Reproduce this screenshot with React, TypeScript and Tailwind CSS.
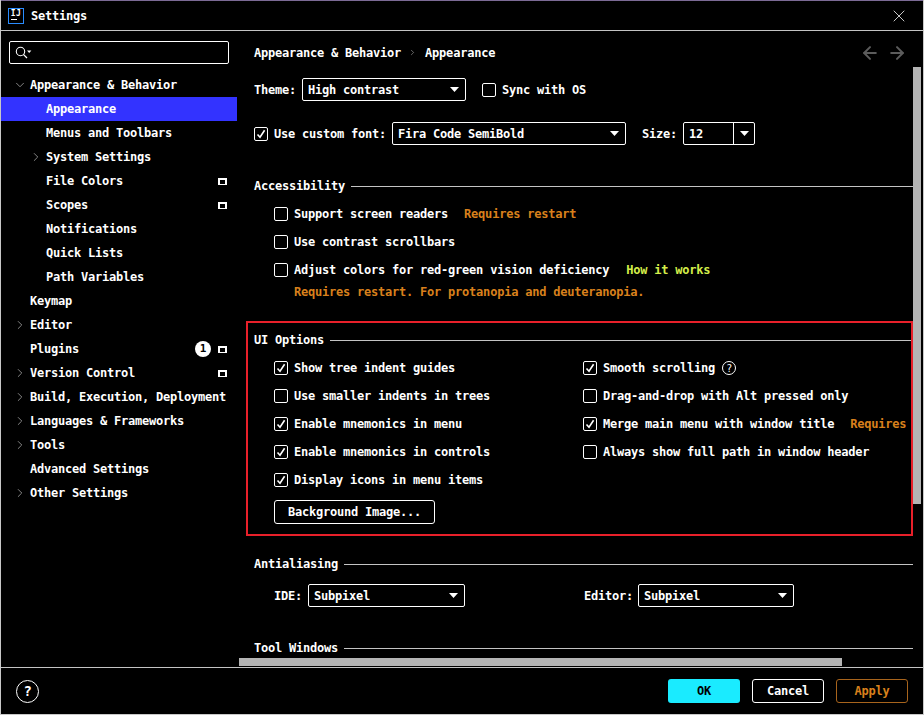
import React from 'react';
import { ChevronDown, ChevronRight, X, ArrowLeft, ArrowRight } from 'lucide-react';

const tree = [
  { label: 'Appearance & Behavior', indent: 0, arrow: 'down' },
  { label: 'Appearance', indent: 1, selected: true },
  { label: 'Menus and Toolbars', indent: 1 },
  { label: 'System Settings', indent: 1, arrow: 'right' },
  { label: 'File Colors', indent: 1, project: true },
  { label: 'Scopes', indent: 1, project: true },
  { label: 'Notifications', indent: 1 },
  { label: 'Quick Lists', indent: 1 },
  { label: 'Path Variables', indent: 1 },
  { label: 'Keymap', indent: 0 },
  { label: 'Editor', indent: 0, arrow: 'right' },
  { label: 'Plugins', indent: 0, project: true, badge: '1' },
  { label: 'Version Control', indent: 0, arrow: 'right', project: true },
  { label: 'Build, Execution, Deployment', indent: 0, arrow: 'right' },
  { label: 'Languages & Frameworks', indent: 0, arrow: 'right' },
  { label: 'Tools', indent: 0, arrow: 'right' },
  { label: 'Advanced Settings', indent: 0 },
  { label: 'Other Settings', indent: 0, arrow: 'right' },
];

const Caret = () => (
  <svg width="9" height="5" viewBox="0 0 9 5" className="shrink-0">
    <path d="M0 0h9L4.500 5z" fill="#fff" />
  </svg>
);

const ProjectIcon = () => (
  <span className="block w-[9px] h-[7px] bg-black border-x-2 border-t-2 border-b border-white shrink-0" />
);

const Check = ({ checked = false }: { checked?: boolean }) => (
  <span className="flex items-center justify-center w-[14px] h-[14px] border border-white rounded-[2px] shrink-0">
    {checked && (
      <svg width="10" height="10" viewBox="0 0 10 10">
        <path d="M1.500 5.500 4 8.200 8.600 1.200" fill="none" stroke="#fff" strokeWidth="1.6" />
      </svg>
    )}
  </span>
);

const CheckRow = ({ label, checked, children }: { label: string; checked?: boolean; children?: React.ReactNode }) => (
  <div className="flex items-center h-[28px] whitespace-nowrap">
    <Check checked={checked} />
    <span className="ml-[6px]">{label}</span>
    {children}
  </div>
);

const Select = ({ value, width }: { value: string; width: string }) => (
  <div className={`flex items-center justify-between h-[23px] border border-white rounded-[2px] pl-[5px] pr-[6px] shrink-0 ${width}`}>
    <span>{value}</span>
    <Caret />
  </div>
);

const Heading = ({ title, className }: { title: string; className: string }) => (
  <div className={`flex items-center h-[16px] whitespace-nowrap ${className}`}>
    <span>{title}</span>
    <span className="flex-1 h-px bg-[#c4c4c4] ml-[6px] mr-[-15px]" />
  </div>
);

const Help = ({ size, text }: { size: string; text: string }) => (
  <span className={`flex items-center justify-center rounded-full border border-white shrink-0 ${size} ${text}`}>?</span>
);

export default function App() {
  return (
    <div className="w-[924px] h-[715px] bg-black text-white flex flex-col overflow-hidden border-x border-b border-[#c8c8c8] border-t-0 font-['DejaVu_Sans_Mono','Liberation_Mono',monospace] text-[12px] tracking-[-0.22px] font-bold">
      <div className="h-px bg-[#7b6a95] -mx-px shrink-0" />
      <div className="flex items-center h-[30px] shrink-0 pl-[7px] border-b border-[#c4c4c4]">
        <span className="flex flex-col items-center w-[16px] h-[16px] border border-[#2a8cff] text-[8px] leading-[9px] font-bold tracking-[0.5px]">
          <span>IJ</span>
          <span className="w-[6px] h-px bg-white mt-[1px] self-start ml-[2px]" />
        </span>
        <span className="ml-[7px]">Settings</span>
        <X size={20} strokeWidth={1.2} color="#c8c8c8" className="ml-auto mr-[14px]" />
      </div>

      <div className="flex flex-1 min-h-0">
        <div className="w-[238px] shrink-0 flex flex-col">
          <div className="flex items-center h-[23px] mx-[8px] mt-[10px] mb-[9px] w-[220px] border border-white rounded-[2px] pl-[5px] shrink-0">
            <svg width="17" height="13" viewBox="0 0 17 13">
              <circle cx="5.500" cy="5.500" r="4.200" fill="none" stroke="#fff" strokeWidth="1.1" />
              <path d="M8.600 8.600 12 12" stroke="#fff" strokeWidth="1.3" />
              <path d="M12 4.500h4.400L14.200 7z" fill="#fff" />
            </svg>
          </div>
          {tree.map((item) => (
            <div
              key={item.label}
              className={`flex items-center h-[24px] mr-[2px] whitespace-nowrap pr-[10px] ${item.selected ? 'bg-[#3333ff]' : ''} ${item.indent ? 'pl-[29px]' : 'pl-[13px]'}`}
            >
              <span className="w-[16px] shrink-0 -ml-px">
                {item.arrow === 'down' && <ChevronDown size={14} strokeWidth={1.4} color="#a0a0a0" />}
                {item.arrow === 'right' && <ChevronRight size={14} strokeWidth={1.4} color="#a0a0a0" />}
              </span>
              <span className="ml-px">{item.label}</span>
              {item.badge && (
                <span className="ml-auto flex items-center justify-center w-[16px] h-[16px] rounded-full bg-white text-black text-[11px] font-bold">
                  {item.badge}
                </span>
              )}
              {item.project && (
                <span className={item.badge ? 'ml-[7px]' : 'ml-auto'}>
                  <ProjectIcon />
                </span>
              )}
            </div>
          ))}
        </div>

        <div className="flex-1 min-w-0 flex flex-col">
          <div className="flex items-center h-[36px] shrink-0 pl-[15px] pr-[16px] pt-[7px]">
            <span>Appearance &amp; Behavior</span>
            <ChevronRight size={9} strokeWidth={1.4} color="#bbb" className="ml-[7px] mr-[8px]" />
            <span>Appearance</span>
            <ArrowLeft size={20} strokeWidth={2.4} color="#5c5c5c" className="ml-auto" />
            <ArrowRight size={20} strokeWidth={2.4} color="#5c5c5c" className="ml-[7px]" />
          </div>

          <div className="flex flex-1 min-h-0">
            <div className="flex-1 min-w-0 pl-[15px] overflow-hidden">
              <div className="flex items-center mt-[11px] whitespace-nowrap">
                <span className="w-[48px]">Theme:</span>
                <Select value="High contrast" width="w-[164px]" />
                <span className="ml-[16px]"><Check /></span>
                <span className="ml-[6px]">Sync with OS</span>
              </div>
              <div className="flex items-center mt-[21px] whitespace-nowrap">
                <Check checked />
                <span className="ml-[6px] w-[118px]">Use custom font:</span>
                <Select value="Fira Code SemiBold" width="w-[234px]" />
                <span className="ml-[16px] w-[41px]">Size:</span>
                <div className="flex items-center h-[23px] w-[72px] border border-white rounded-[2px] shrink-0">
                  <span className="pl-[5px] flex-1">12</span>
                  <span className="flex items-center justify-center w-[21px] h-full border-l border-white"><Caret /></span>
                </div>
              </div>

              <Heading title="Accessibility" className="mt-[33px]" />
              <div className="pl-[20px] mt-[6px]">
                <CheckRow label="Support screen readers">
                  <span className="ml-[16px] text-[#d9801c]">Requires restart</span>
                </CheckRow>
                <CheckRow label="Use contrast scrollbars" />
                <CheckRow label="Adjust colors for red-green vision deficiency">
                  <span className="ml-[17px] text-[#d4ee4a]">How it works</span>
                </CheckRow>
                <div className="pl-[20px] h-[16px] flex items-center text-[#d9801c]">Requires restart. For protanopia and deuteranopia.</div>
              </div>

              <Heading title="UI Options" className="mt-[32px]" />
              <div className="grid grid-cols-[309px_1fr] pl-[20px] mt-[6px]">
                <CheckRow label="Show tree indent guides" checked />
                <CheckRow label="Smooth scrolling" checked>
                  <span className="ml-[7px]"><Help size="w-[14px] h-[14px]" text="text-[10px] font-normal" /></span>
                </CheckRow>
                <CheckRow label="Use smaller indents in trees" />
                <CheckRow label="Drag-and-drop with Alt pressed only" />
                <CheckRow label="Enable mnemonics in menu" checked />
                <CheckRow label="Merge main menu with window title" checked>
                  <span className="ml-[16px] text-[#d9801c]">Requires</span>
                </CheckRow>
                <CheckRow label="Enable mnemonics in controls" checked />
                <CheckRow label="Always show full path in window header" />
                <CheckRow label="Display icons in menu items" checked />
              </div>
              <button className="block ml-[20px] mt-[6px] w-[161px] h-[24px] border border-white rounded-[3px] text-center">Background Image...</button>

              <Heading title="Antialiasing" className="mt-[32px]" />
              <div className="flex items-center mt-[12px] whitespace-nowrap pl-[20px]">
                <span className="w-[34px]">IDE:</span>
                <Select value="Subpixel" width="w-[157px]" />
                <span className="ml-[119px] w-[54px]">Editor:</span>
                <Select value="Subpixel" width="w-[156px]" />
              </div>
              <Heading title="Tool Windows" className="mt-[33px]" />
            </div>
            <div className="w-[10px] shrink-0 pr-px">
              <div className="h-[437px] w-[8px] bg-[#b4b4b4]" />
            </div>
          </div>

          <div className="h-[9px] shrink-0">
            <div className="w-[603px] h-[8px] bg-[#b4b4b4]" />
          </div>
        </div>
      </div>

      <div className="flex items-center h-[47px] shrink-0 border-t border-[#c4c4c4] pl-[15px] pr-[15px]">
        <Help size="w-[23px] h-[23px]" text="text-[14px] font-bold" />
        <button className="ml-auto w-[72px] h-[24px] rounded-[3px] bg-[#1aebff] text-black text-center">OK</button>
        <button className="ml-[12px] w-[72px] h-[24px] rounded-[3px] border border-white text-center">Cancel</button>
        <button className="ml-[12px] w-[72px] h-[24px] rounded-[3px] border border-[#a8641c] text-[#d9801c] text-center">Apply</button>
      </div>

      <div className="absolute left-[246px] top-[321px] w-[667px] h-[215px] border-2 border-[#e8202a] pointer-events-none" />
    </div>
  );
}
